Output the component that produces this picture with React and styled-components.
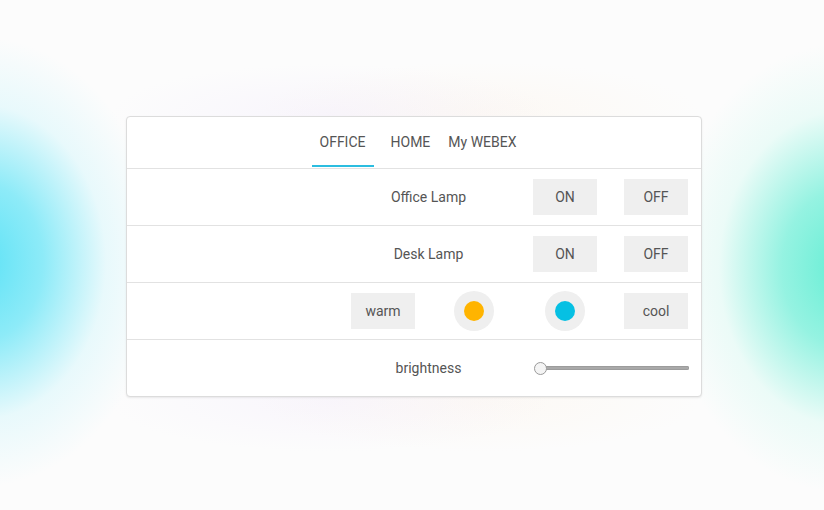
import React from "react";
import styled, { createGlobalStyle } from "styled-components";

const Global = createGlobalStyle`
  html, body { margin: 0; padding: 0; }
  body { font-family: Roboto, "Liberation Sans", Arial, sans-serif; }
`;

const Page = styled.div`
  width: 824px;
  height: 510px;
  box-sizing: border-box;
  padding: 2px 0 0 4px;
  display: flex;
  align-items: center;
  justify-content: center;
  background:
    radial-gradient(ellipse 180px 225px at -20px 262px, rgba(92, 226, 246, 1) 0%, rgba(110, 230, 247, 0.78) 35%, rgba(190, 243, 251, 0.32) 70%, rgba(255,255,255,0) 100%),
    radial-gradient(ellipse 180px 225px at 845px 268px, rgba(100, 238, 212, 1) 0%, rgba(120, 240, 218, 0.78) 35%, rgba(200, 249, 238, 0.32) 70%, rgba(255,255,255,0) 100%),
    radial-gradient(ellipse 220px 50px at 330px 114px, rgba(240, 232, 252, 0.35) 0%, rgba(255,255,255,0) 100%),
    radial-gradient(ellipse 220px 50px at 480px 112px, rgba(253, 242, 228, 0.35) 0%, rgba(255,255,255,0) 100%),
    radial-gradient(ellipse 220px 50px at 330px 402px, rgba(242, 234, 252, 0.35) 0%, rgba(255,255,255,0) 100%),
    radial-gradient(ellipse 220px 50px at 480px 402px, rgba(253, 243, 230, 0.35) 0%, rgba(255,255,255,0) 100%),
    #fcfcfc;
`;

const Card = styled.div`
  width: 576px;
  box-sizing: border-box;
  background: #ffffff;
  border: 1px solid #dcdcdc;
  border-radius: 4px;
  box-shadow: 0 1px 2px rgba(0, 0, 0, 0.08);
  overflow: hidden;
`;

const TabBar = styled.div`
  height: 51px;
  display: flex;
  justify-content: center;
  align-items: stretch;
  padding-left: 8px;
`;

const Tab = styled.div`
  position: relative;
  display: flex;
  align-items: center;
  margin-left: ${(p) => p.$offset || 0}px;
  padding: 0 8px;
  font-size: 14px;
  color: #555555;
  cursor: pointer;
  &::after {
    content: "";
    position: absolute;
    left: 0;
    right: 0;
    bottom: 1px;
    height: 2px;
    background: ${(p) => (p.$active ? "#2bbde0" : "transparent")};
  }
`;

const Row = styled.div`
  height: 56px;
  border-top: 1px solid #e2e2e2;
  display: grid;
  grid-template-columns: 1fr repeat(4, 64px);
  column-gap: 27px;
  padding-right: 13px;
  align-items: center;
`;

const Label = styled.div`
  grid-column: 2 / 4;
  text-align: center;
  font-size: 14px;
  color: #555555;
`;

const Button = styled.div`
  grid-column: ${(p) => p.$col};
  height: 36px;
  background: #efefef;
  display: flex;
  align-items: center;
  justify-content: center;
  font-size: 14px;
  color: #555555;
  cursor: pointer;
`;

const Swatch = styled.div`
  grid-column: ${(p) => p.$col};
  justify-self: center;
  width: 40px;
  height: 40px;
  border-radius: 50%;
  background: #efefef;
  display: flex;
  align-items: center;
  justify-content: center;
  &::before {
    content: "";
    width: 20px;
    height: 20px;
    border-radius: 50%;
    background: ${(p) => p.$color};
  }
`;

const Slider = styled.div`
  grid-column: 4 / 6;
  position: relative;
  height: 14px;
  margin-right: -1px;
`;

const Track = styled.div`
  position: absolute;
  left: 6px;
  right: 0;
  top: 5px;
  height: 4px;
  border-radius: 2px;
  background: #a9a9a9;
  box-shadow: inset 0 0 0 0.5px #8f8f8f;
`;

const Thumb = styled.div`
  position: absolute;
  left: 1px;
  top: 1px;
  width: 11px;
  height: 11px;
  border-radius: 50%;
  background: #f4f4f4;
  border: 1px solid #9a9a9a;
`;

export default function App() {
  return (
    <>
      <Global />
      <Page>
        <Card>
          <TabBar>
            <Tab $active>OFFICE</Tab>
            <Tab $offset={9}>HOME</Tab>
            <Tab $offset={2}>My WEBEX</Tab>
          </TabBar>
          <Row>
            <Label>Office Lamp</Label>
            <Button $col="4">ON</Button>
            <Button $col="5">OFF</Button>
          </Row>
          <Row>
            <Label>Desk Lamp</Label>
            <Button $col="4">ON</Button>
            <Button $col="5">OFF</Button>
          </Row>
          <Row>
            <Button $col="2">warm</Button>
            <Swatch $col="3" $color="#ffb400" />
            <Swatch $col="4" $color="#06c0e3" />
            <Button $col="5">cool</Button>
          </Row>
          <Row>
            <Label>brightness</Label>
            <Slider>
              <Track />
              <Thumb />
            </Slider>
          </Row>
        </Card>
      </Page>
    </>
  );
}
